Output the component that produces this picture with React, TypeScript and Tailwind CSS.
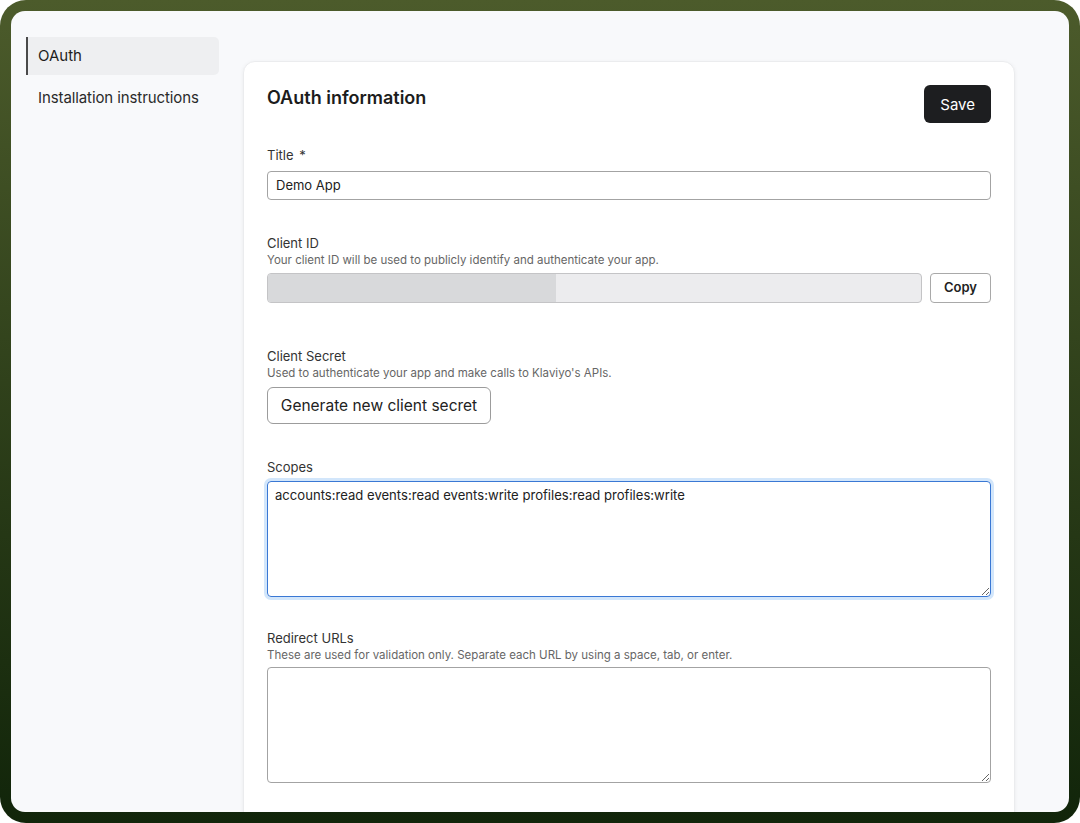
import React from "react";

export default function App() {
  return (
    <div className="w-[1080px] h-[823px] bg-white" style={{ fontFamily: "Inter, 'Noto Sans', sans-serif" }}>
      <div className="w-full h-full rounded-[26px] bg-gradient-to-b from-[#4c5b2b] to-[#11250a] p-[11px]">
        <div className="w-full h-full rounded-[14px] bg-[#f8f9fb] overflow-hidden flex">
          {/* Sidebar */}
          <div className="w-[208px] shrink-0 pl-[15px] pt-[26px]">
            <div className="h-[38px] w-[193px] bg-[#eeeff1] border-l-2 border-[#4a4a4a] rounded-r-[5px] flex items-center pl-[10px] text-[15px] text-[#1e1e1e]">
              OAuth
            </div>
            <div className="h-[46px] flex items-center pl-[12px] text-[15px] text-[#2a2a2a] tracking-[-0.1px]">
              Installation instructions
            </div>
          </div>
          {/* Main */}
          <div className="flex-1 pl-[24px] pt-[50px] pr-[54px]">
            <div className="w-[772px] h-[900px] bg-white rounded-[12px] border border-[#ebecee] shadow-[0_1px_4px_rgba(0,0,0,0.06)] px-[23px] pt-[23px]">
              <div className="flex items-start justify-between h-[37px]">
                <h1 className="text-[18px] font-semibold text-[#1c1c1c] leading-[22px] mt-[2px]">OAuth information</h1>
                <button className="h-[38px] px-[16px] rounded-[6px] bg-[#1d1e20] text-white text-[15px] leading-none">
                  Save
                </button>
              </div>

              <div className="mt-[25px] text-[13px] leading-[16px] text-[#333]">
                Title <span className="ml-[2px]">*</span>
              </div>
              <div className="mt-[8px] h-[29px] w-full border border-[#a3a3a3] rounded-[4px] flex items-center px-[8px] text-[13px] text-[#222]">
                Demo App
              </div>

              <div className="mt-[35px] text-[13px] leading-[16px] text-[#333]">Client ID</div>
              <div className="mt-[2px] text-[11.5px] leading-[14px] text-[#666]">
                Your client ID will be used to publicly identify and authenticate your app.
              </div>
              <div className="mt-[6px] flex gap-[8px]">
                <div className="flex-1 h-[30px] rounded-[4px] border border-[#c4c4c6] bg-[#ececee] overflow-hidden">
                  <div className="h-full w-[288px] bg-[#d8d9db]" />
                </div>
                <button className="h-[30px] w-[61px] rounded-[4px] border border-[#a9a9a9] bg-white text-[13px] font-semibold text-[#222]">
                  Copy
                </button>
              </div>

              <div className="mt-[45px] text-[13px] leading-[16px] text-[#333]">Client Secret</div>
              <div className="mt-[2px] text-[11.5px] leading-[14px] text-[#666]">
                Used to authenticate your app and make calls to Klaviyo's APIs.
              </div>
              <button className="mt-[7px] h-[37px] w-[224px] rounded-[6px] border border-[#9c9c9c] bg-white text-[15.5px] font-normal text-[#222]">
                Generate new client secret
              </button>

              <div className="mt-[35px] text-[13px] leading-[16px] text-[#333]">Scopes</div>
              <textarea
                className="mt-[6px] block h-[116px] w-full rounded-[4px] border border-[#3a78d4] ring-[3px] ring-[#d2e6fb] outline-none px-[7px] py-[5px] text-[13.1px] leading-[16px] text-[#222] resize-y"
                defaultValue="accounts:read events:read events:write profiles:read profiles:write"
              />

              <div className="mt-[33px] text-[13px] leading-[16px] text-[#333]">Redirect URLs</div>
              <div className="mt-[2px] text-[11.5px] leading-[14px] text-[#666]">
                These are used for validation only. Separate each URL by using a space, tab, or enter.
              </div>
              <textarea
                className="mt-[5px] block h-[116px] w-full rounded-[4px] border border-[#a3a3a3] outline-none px-[7px] py-[5px] text-[13px] text-[#222] resize-y"
                defaultValue=""
              />
            </div>
          </div>
        </div>
      </div>
    </div>
  );
}
